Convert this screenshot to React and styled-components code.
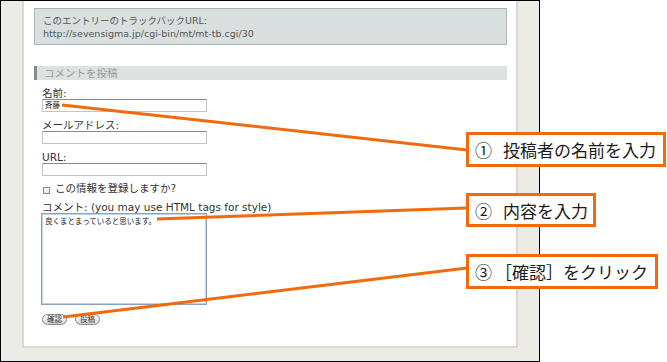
import styled, { createGlobalStyle } from 'styled-components';

const ORANGE = '#f26a0e';

const GlobalStyle = createGlobalStyle`
  html, body {
    margin: 0;
    padding: 0;
    background: #ffffff;
  }
  body {
    font-family: 'DejaVu Sans', 'Noto Sans CJK JP', sans-serif;
  }
`;

const Stage = styled.div`
  position: relative;
  width: 667px;
  height: 362px;
  overflow: hidden;
  background: #ffffff;
`;

const Frame = styled.div`
  box-sizing: border-box;
  width: 540px;
  height: 362px;
  border: 1px solid #000;
  background: #ecebe6;
  padding: 0 21px 13px 21px;
  display: flex;
  flex-direction: column;
`;

const Page = styled.div`
  flex: 1;
  background: #fff;
  border: 2px solid #d9d8d3;
  border-top: none;
  padding: 7px 9px 0 10px;
`;

const TrackbackBox = styled.div`
  border: 1px solid #a9b5b7;
  background: #d9dfde;
  padding: 5px 8px 4px;
  font-size: 9.5px;
  line-height: 13px;
  color: #555;
`;

const SectionTitle = styled.h3`
  margin: 21px 0 0;
  border-left: 3px solid #7f8e91;
  background: #dde2e1;
  padding-left: 7px;
  font-size: 10.5px;
  line-height: 14px;
  font-weight: normal;
  color: #9a9a9a;
`;

const Form = styled.form`
  padding-left: 8px;
  display: flex;
  flex-direction: column;
  align-items: flex-start;
`;

const Label = styled.label`
  display: block;
  margin-top: ${(p) => p.$gap}px;
  font-size: 10.5px;
  line-height: 12px;
  color: #333;
`;

const Input = styled.div`
  box-sizing: border-box;
  width: 165px;
  height: 13px;
  border: 1px solid #c4c4c4;
  border-top-color: #8a8a8a;
  background: #fff;
  font-size: 7.5px;
  line-height: 11px;
  padding-left: 2px;
  color: #222;
`;

const CheckRow = styled.div`
  display: flex;
  align-items: center;
  gap: 5px;
  margin-top: 6px;
  font-size: 10.5px;
  line-height: 13px;
  color: #333;
`;

const CheckBox = styled.span`
  box-sizing: border-box;
  width: 7px;
  height: 7px;
  margin: 3px 0 0 1px;
  border: 1px solid #8a8a8a;
  background: linear-gradient(#fff, #e4e4e4);
`;

const TextArea = styled.div`
  box-sizing: border-box;
  width: 166px;
  height: 92px;
  margin-left: -1px;
  border: 1px solid #86a3bb;
  box-shadow: inset 0 0 0 1px #c2d4e3;
  background: #fff;
  padding: 2px 3px;
  font-size: 7.5px;
  line-height: 11px;
  color: #222;
`;

const ButtonRow = styled.div`
  display: flex;
  gap: 8px;
  margin-top: 9px;
`;

const Button = styled.span`
  box-sizing: border-box;
  height: 11px;
  padding: 0 4px;
  border: 1px solid #8b8b8b;
  border-radius: 6px;
  background: linear-gradient(#ffffff, #d2d2d2);
  font-size: 7.5px;
  line-height: 9px;
  color: #333;
`;

const Callout = styled.div`
  position: absolute;
  left: 466px;
  top: ${(p) => p.$top}px;
  width: ${(p) => p.$width}px;
  height: ${(p) => p.$height}px;
  box-sizing: border-box;
  border: 3px solid ${ORANGE};
  background: #fff;
  padding-left: 6px;
  display: flex;
  align-items: center;
  font-family: 'Noto Sans CJK JP', sans-serif;
  font-size: 17px;
  color: #1a1a1a;
  white-space: nowrap;
`;

const Num = styled.span`
  margin-right: ${(p) => p.$space}px;
`;

const Leaders = styled.svg`
  position: absolute;
  left: 0;
  top: 0;
`;

const leaders = [
  [62, 105, 467, 150],
  [157, 219, 467, 208],
  [63, 317, 467, 268],
];

const callouts = [
  { top: 132, width: 200, height: 35, num: '①', space: 11, text: '投稿者の名前を入力' },
  { top: 193, width: 130, height: 34, num: '②', space: 11, text: '内容を入力' },
  { top: 254, width: 192, height: 35, num: '③', space: 3, text: '［確認］をクリック' },
];

export default function App() {
  return (
    <Stage>
      <GlobalStyle />
      <Frame>
        <Page>
          <TrackbackBox>
            <div>このエントリーのトラックバックURL:</div>
            <div>http://sevensigma.jp/cgi-bin/mt/mt-tb.cgi/30</div>
          </TrackbackBox>
          <SectionTitle>コメントを投稿</SectionTitle>
          <Form>
            <Label $gap={7}>名前:</Label>
            <Input>斉藤</Input>
            <Label $gap={7}>メールアドレス:</Label>
            <Input />
            <Label $gap={7}>URL:</Label>
            <Input />
            <CheckRow>
              <CheckBox />
              この情報を登録しますか?
            </CheckRow>
            <Label $gap={6}>コメント: (you may use HTML tags for style)</Label>
            <TextArea>良くまとまっていると思います。</TextArea>
            <ButtonRow>
              <Button>確認</Button>
              <Button>投稿</Button>
            </ButtonRow>
          </Form>
        </Page>
      </Frame>
      <Leaders width="667" height="362">
        {leaders.map(([x1, y1, x2, y2], i) => (
          <line key={i} x1={x1} y1={y1} x2={x2} y2={y2} stroke={ORANGE} strokeWidth="3" />
        ))}
      </Leaders>
      {callouts.map((c) => (
        <Callout key={c.top} $top={c.top} $width={c.width} $height={c.height}>
          <Num $space={c.space}>{c.num}</Num>
          {c.text}
        </Callout>
      ))}
    </Stage>
  );
}
